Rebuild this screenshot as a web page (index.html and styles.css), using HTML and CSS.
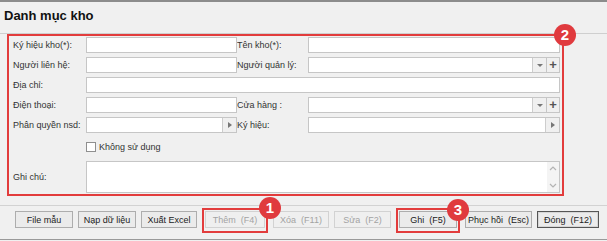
FILE: index.html
```html
<!DOCTYPE html>
<html>
<head>
    <title>Danh mục kho</title>
    <link rel="stylesheet" href="styles.css">
</head>
<body>
<div class="window">
    <div class="title">Danh mục kho</div>

    <div class="panel">
        <div class="form-box">
            <div class="form-grid">
                <label>Ký hiệu kho(*):</label>
                <div class="field"></div>
                <label>Tên kho(*):</label>
                <div class="field"></div>

                <label>Người liên hệ:</label>
                <div class="field"></div>
                <label>Người quản lý:</label>
                <div class="combo-wrap">
                    <div class="field combo"><span class="btn-part"><span class="tri-down"></span></span></div>
                    <span class="plus">+</span>
                </div>

                <label>Địa chỉ:</label>
                <div class="field wide"></div>

                <label>Điện thoại:</label>
                <div class="field"></div>
                <label>Cửa hàng :</label>
                <div class="combo-wrap">
                    <div class="field combo"><span class="btn-part"><span class="tri-down"></span></span></div>
                    <span class="plus">+</span>
                </div>

                <label>Phân quyền nsd:</label>
                <div class="field combo"><span class="btn-part"><span class="tri-right"></span></span></div>
                <label>Ký hiệu:</label>
                <div class="field combo"><span class="btn-part"><span class="tri-right"></span></span></div>

                <div class="check-row">
                    <span class="checkbox"></span>
                    <span>Không sử dụng</span>
                </div>

                <label>Ghi chú:</label>
                <div class="field wide memo">
                    <div class="scroll">
                        <svg width="8" height="6" viewBox="0 0 8 6"><path d="M1 5 L4 2 L7 5" fill="none" stroke="#b4b4b4" stroke-width="1.2"/></svg>
                        <svg width="8" height="6" viewBox="0 0 8 6"><path d="M1 1 L4 4 L7 1" fill="none" stroke="#b4b4b4" stroke-width="1.2"/></svg>
                    </div>
                </div>
            </div>
        </div>
    </div>

    <div class="actions">
        <button class="w58">File mẫu</button>
        <button class="w58">Nạp dữ liệu</button>
        <button class="w56">Xuất Excel</button>
        <span class="mark"><button class="w60" disabled>Thêm&nbsp; (F4)</button></span>
        <button class="w56" disabled>Xóa&nbsp; (F11)</button>
        <button class="w57" disabled>Sửa&nbsp; (F2)</button>
        <span class="mark"><button class="w58">Ghi&nbsp; (F5)</button></span>
        <button class="w67">Phục hồi&nbsp; (Esc)</button>
        <button class="w62 focused">Đóng&nbsp; (F12)</button>
    </div>

    <span class="badge badge-1">1</span>
    <span class="badge badge-2">2</span>
    <span class="badge badge-3">3</span>
</div>
</body>
</html>
```

FILE: styles.css
```css
body {
    margin: 0;
    background-color: #f0f0f0;
    font-family: "Liberation Sans", Arial, sans-serif;
    font-size: 9px;
    color: #333;
}

.window {
    position: relative;
    height: 241px;
    border-top: 2px solid #8c8c8c;
    box-sizing: border-box;
}

.title {
    height: 31px;
    padding-left: 4px;
    font-size: 13px;
    font-weight: bold;
    line-height: 28px;
    color: #111;
}

.panel {
    border-top: 1px solid #cfcfcf;
}

.form-box {
    margin-left: 7px;
    width: 557px;
    height: 162px;
    box-sizing: border-box;
    border: 2px solid #e23c3c;
    padding: 1px 2px 1px 4px;
}

.form-grid {
    display: grid;
    grid-template-columns: 73px 151px 71px 252px;
    grid-template-rows: 16px 16px 16px 16px 16px 20px 32px;
    row-gap: 4px;
    align-items: center;
}

.form-grid label {
    white-space: nowrap;
}

.field {
    height: 16px;
    box-sizing: border-box;
    background-color: #fff;
    border: 1px solid #c6c6c6;
    position: relative;
}

.wide {
    grid-column: 2 / 5;
}

.combo {
    display: flex;
    justify-content: flex-end;
}

.combo-wrap {
    display: flex;
}

.combo-wrap .combo {
    flex-grow: 1;
}

.btn-part {
    width: 13px;
    background-color: #f0f0f0;
    border-left: 1px solid #cdcdcd;
    display: flex;
    align-items: center;
    justify-content: center;
}

.tri-down {
    width: 0;
    height: 0;
    border-left: 3px solid transparent;
    border-right: 3px solid transparent;
    border-top: 3px solid #777;
}

.tri-right {
    width: 0;
    height: 0;
    border-top: 3px solid transparent;
    border-bottom: 3px solid transparent;
    border-left: 4px solid #777;
}

.plus {
    width: 13px;
    height: 16px;
    box-sizing: border-box;
    border: 1px solid #c6c6c6;
    border-left: none;
    background-color: #f0f0f0;
    text-align: center;
    font-size: 13px;
    font-weight: bold;
    line-height: 14px;
    color: #555;
}

.check-row {
    grid-column: 2 / 5;
    display: flex;
    align-items: center;
    gap: 3px;
}

.checkbox {
    width: 10px;
    height: 10px;
    box-sizing: border-box;
    background-color: #fff;
    border: 1px solid #8f8f8f;
}

.memo {
    height: 32px;
}

.scroll {
    position: absolute;
    right: 0;
    top: 0;
    bottom: 0;
    width: 12px;
    background-color: #f4f4f4;
    display: flex;
    flex-direction: column;
    justify-content: space-between;
    align-items: center;
    padding: 3px 0;
    box-sizing: border-box;
}

.actions {
    margin-top: 9px;
    border-top: 1px solid #d2d2d2;
    border-bottom: 1px solid #9a9a9a;
    height: 31px;
    padding: 2px 0 0 15px;
    display: flex;
    align-items: flex-start;
    gap: 5px;
}

.actions button {
    margin-top: 3px;
    height: 17px;
    padding: 0;
    background-color: #ebebeb;
    border: 1px solid #adadad;
    font-family: "Liberation Sans", Arial, sans-serif;
    font-size: 9px;
    color: #222;
}

.actions button:disabled {
    color: #a3a3a3;
    border-color: #d2d2d2;
    background-color: #efefef;
}

.actions .mark {
    border: 2px solid #e23c3c;
    padding: 1px;
    height: 19px;
}

.actions .mark button {
    margin-top: 0;
}

.actions button.focused {
    border: 1px solid #555;
    box-shadow: inset 0 0 0 1px #d6d6d6;
}

.w56 { width: 56px; }
.w57 { width: 57px; }
.w58 { width: 58px; }
.w60 { width: 60px; }
.w62 { width: 62px; }
.w67 { width: 67px; }

.badge {
    position: absolute;
    width: 22px;
    height: 22px;
    border-radius: 50%;
    background-color: #e03a3e;
    color: #fff;
    font-size: 15px;
    font-weight: bold;
    text-align: center;
    line-height: 22px;
}

.badge-1 { left: 259px; top: 195px; }
.badge-2 { left: 554px; top: 22px; }
.badge-3 { left: 447px; top: 197px; }
```
